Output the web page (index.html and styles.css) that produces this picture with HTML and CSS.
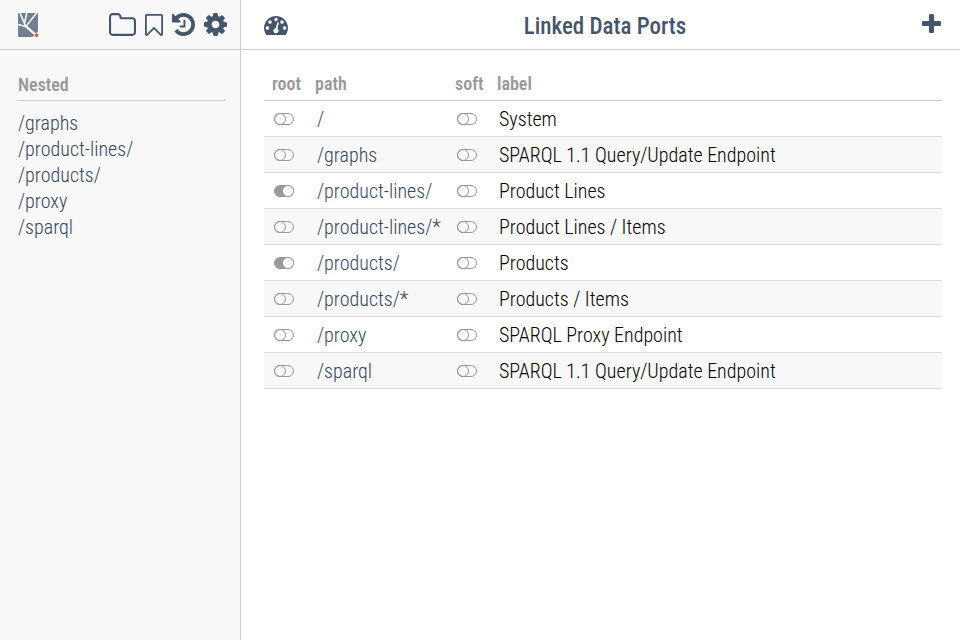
FILE: index.html
```html
<!DOCTYPE html>
<html lang="en">
<head>
<meta charset="utf-8">
<meta name="viewport" content="width=device-width, initial-scale=1">
<title>Linked Data Ports</title>
<link rel="stylesheet" href="styles.css">
</head>
<body>
<aside class="sidebar">
  <header class="bar sidebar-bar">
    <a class="icon" href="#" aria-label="Home">
      <svg width="20" height="24" viewBox="0 0 20 24">
        <rect width="20" height="24" rx="1" fill="#708090"/>
        <path d="M0 11.5L7.8 13.6L20 24M2 0L7.8 13.6L18.5 0M8.8 0L6.6 9.5" fill="none" stroke="#fff" stroke-width="1.5"/>
        <path d="M8 13.4L18.6 22.5" stroke="#fff" stroke-width="2.2"/>
        <path d="M14.8 24L20 18.6V24z" fill="#f8f8f8"/>
        <circle cx="18.6" cy="22.2" r="1.7" fill="#f9471a"/>
      </svg>
    </a>
    <nav class="tools">
      <button class="icon" type="button" aria-label="Nested ports"><svg width="27" height="23" viewBox="64 128 1664 1408"><path d="M1600 1312v-704q0-40-28-68t-68-28h-704q-40 0-68-28t-28-68v-64q0-40-28-68t-68-28h-320q-40 0-68 28t-28 68v960q0 40 28 68t68 28h1216q40 0 68-28t28-68zm128-704v704q0 92-66 158t-158 66h-1216q-92 0-158-66t-66-158v-960q0-92 66-158t158-66h320q92 0 158 66t66 158v32h672q92 0 158 66t66 158z"/></svg></button>
      <button class="icon" type="button" aria-label="Bookmarks"><svg width="18" height="22" viewBox="256 128 1280 1513" preserveAspectRatio="none"><path d="M1408 256h-1024v1242l423-406 89-85 89 85 423 406v-1242zm12-128q23 0 44 9 33 13 52.5 41t19.5 62v1289q0 34-19.5 62t-52.5 41q-19 8-44 8-48 0-83-32l-441-424-441 424q-36 33-83 33-23 0-44-9-33-13-52.5-41t-19.5-62v-1289q0-34 19.5-62t52.5-41q21-9 44-9h1048z"/></svg></button>
      <button class="icon" type="button" aria-label="History"><svg width="23" height="23" viewBox="128 128 1536 1536"><path d="M1664 896q0 156-61 298t-164 245-245 164-298 61q-172 0-327-72.5t-264-204.5q-7-10-6.5-22.5t8.5-20.5l137-138q10-9 25-9 16 2 23 12 73 95 179 147t225 52q104 0 198.5-40.5t163.5-109.5 109.5-163.5 40.5-198.5-40.5-198.5-109.5-163.5-163.5-109.5-198.5-40.5q-98 0-188 35.5t-160 101.5l137 138q31 30 14 69-17 40-59 40h-448q-26 0-45-19t-19-45v-448q0-42 40-59 39-17 69 14l130 129q107-101 244.5-156.5t284.5-55.5q156 0 298 61t245 164 164 245 61 298zm-640-288v448q0 14-9 23t-23 9h-320q-14 0-23-9t-9-23v-64q0-14 9-23t23-9h224v-352q0-14 9-23t23-9h64q14 0 23 9t9 23z"/></svg></button>
      <button class="icon" type="button" aria-label="Settings"><svg width="23" height="23" viewBox="128 128 1536 1536"><path d="M1152 896q0-106-75-181t-181-75-181 75-75 181 75 181 181 75 181-75 75-181zm512-109v222q0 12-8 23t-20 13l-185 28q-19 54-39 91 35 50 107 138 10 12 10 25t-9 23q-27 37-99 108t-94 71q-12 0-26-9l-138-108q-44 23-91 38-16 136-29 186-7 28-36 28h-222q-14 0-24.5-8.5t-11.5-21.5l-28-184q-49-16-90-37l-141 107q-10 9-25 9-14 0-25-11-126-114-165-168-7-10-7-23 0-12 8-23 15-21 51-66.5t54-70.5q-27-50-41-99l-183-27q-13-2-21-12.5t-8-23.5v-222q0-12 8-23t19-13l186-28q14-46 39-92-40-57-107-138-10-12-10-24 0-10 9-23 26-36 98.5-107.5t94.5-71.5q13 0 26 10l138 107q44-23 91-38 16-136 29-186 7-28 36-28h222q14 0 24.5 8.5t11.5 21.5l28 184q49 16 90 37l142-107q9-9 24-9 13 0 25 10 129 119 165 170 7 8 7 22 0 12-8 23-15 21-51 66.5t-54 70.5q26 50 41 98l183 28q13 2 21 12.5t8 23.5z"/></svg></button>
    </nav>
  </header>
  <section class="nested">
    <h2 class="nested-title">Nested</h2>
    <ul class="nested-list">
      <li><a href="#">/graphs</a></li>
      <li><a href="#">/product-lines/</a></li>
      <li><a href="#">/products/</a></li>
      <li><a href="#">/proxy</a></li>
      <li><a href="#">/sparql</a></li>
    </ul>
  </section>
</aside>
<main class="main">
  <header class="bar main-bar">
    <button class="icon" type="button" aria-label="Dashboard"><svg width="24" height="19" viewBox="0 256 1792 1408"><path d="M384 1152q0-53-37.5-90.5t-90.5-37.5-90.5 37.5-37.5 90.5 37.5 90.5 90.5 37.5 90.5-37.5 37.5-90.5zm192-448q0-53-37.5-90.5t-90.5-37.5-90.5 37.5-37.5 90.5 37.5 90.5 90.5 37.5 90.5-37.5 37.5-90.5zm428 481l101-382q6-26-7.5-48.5t-38.5-29.5-48 6.5-30 39.5l-101 382q-60 5-107 43.5t-63 98.5q-20 77 20 146t117 89 146-20 89-117q16-60-6-117t-72-91zm660-33q0-53-37.5-90.5t-90.5-37.5-90.5 37.5-37.5 90.5 37.5 90.5 90.5 37.5 90.5-37.5 37.5-90.5zm-640-640q0-53-37.5-90.5t-90.5-37.5-90.5 37.5-37.5 90.5 37.5 90.5 90.5 37.5 90.5-37.5 37.5-90.5zm448 192q0-53-37.5-90.5t-90.5-37.5-90.5 37.5-37.5 90.5 37.5 90.5 90.5 37.5 90.5-37.5 37.5-90.5zm320 448q0 261-141 483-19 29-54 29h-1402q-35 0-54-29-141-221-141-483 0-182 71-348t191-286 286-191 348-71 348 71 286 191 191 286 71 348z"/></svg></button>
    <h1 class="title">Linked Data Ports</h1>
    <button class="icon add" type="button" aria-label="Add port"><svg width="19" height="19" viewBox="192 128 1408 1408"><path d="M1600 736v192q0 40-28 68t-68 28h-416v416q0 40-28 68t-68 28h-192q-40 0-68-28t-28-68v-416h-416q-40 0-68-28t-28-68v-192q0-40 28-68t68-28h416v-416q0-40 28-68t68-28h192q40 0 68 28t28 68v416h416q40 0 68 28t28 68z"/></svg></button>
  </header>
  <div class="content">
    <table class="ports">
      <colgroup><col class="col-root"><col class="col-path"><col class="col-soft"><col></colgroup>
      <thead>
        <tr><th scope="col">root</th><th scope="col">path</th><th scope="col">soft</th><th scope="col">label</th></tr>
      </thead>
      <tbody>
        <tr><td><input type="checkbox" class="toggle" aria-label="root"></td><td><a href="#">/</a></td><td><input type="checkbox" class="toggle" aria-label="soft"></td><td>System</td></tr>
        <tr><td><input type="checkbox" class="toggle" aria-label="root"></td><td><a href="#">/graphs</a></td><td><input type="checkbox" class="toggle" aria-label="soft"></td><td>SPARQL 1.1 Query/Update Endpoint</td></tr>
        <tr><td><input type="checkbox" class="toggle" aria-label="root" checked></td><td><a href="#">/product-lines/</a></td><td><input type="checkbox" class="toggle" aria-label="soft"></td><td>Product Lines</td></tr>
        <tr><td><input type="checkbox" class="toggle" aria-label="root"></td><td><a href="#">/product-lines/*</a></td><td><input type="checkbox" class="toggle" aria-label="soft"></td><td>Product Lines / Items</td></tr>
        <tr><td><input type="checkbox" class="toggle" aria-label="root" checked></td><td><a href="#">/products/</a></td><td><input type="checkbox" class="toggle" aria-label="soft"></td><td>Products</td></tr>
        <tr><td><input type="checkbox" class="toggle" aria-label="root"></td><td><a href="#">/products/*</a></td><td><input type="checkbox" class="toggle" aria-label="soft"></td><td>Products / Items</td></tr>
        <tr><td><input type="checkbox" class="toggle" aria-label="root"></td><td><a href="#">/proxy</a></td><td><input type="checkbox" class="toggle" aria-label="soft"></td><td>SPARQL Proxy Endpoint</td></tr>
        <tr><td><input type="checkbox" class="toggle" aria-label="root"></td><td><a href="#">/sparql</a></td><td><input type="checkbox" class="toggle" aria-label="soft"></td><td>SPARQL 1.1 Query/Update Endpoint</td></tr>
      </tbody>
    </table>
  </div>
</main>
</body>
</html>
```
FILE: styles.css
```css
*,
*::before {
  box-sizing: border-box;
}

body {
  margin: 0;
  min-height: 100vh;
  display: grid;
  grid-template-columns: 1fr 3fr;
  background: #fff;
  color: #000;
  font: 300 20px/26px "Roboto Condensed", Roboto, sans-serif;
}

a {
  color: #34465c;
  text-decoration: none;
}

.sidebar {
  background: #f8f8f8;
  border-right: 1px solid #ccc;
  margin-right: -1px;
}

.bar {
  display: flex;
  align-items: center;
  height: 50px;
  border-bottom: 1px solid #ccc;
}

.sidebar-bar {
  justify-content: space-between;
  padding: 0 13px 0 18px;
}

.tools {
  display: flex;
  align-items: center;
  gap: 9px;
}

.icon {
  display: block;
  padding: 0;
  border: 0;
  background: none;
  color: #44566c;
  cursor: pointer;
}

.icon svg {
  display: block;
  fill: currentColor;
}

.nested {
  padding: 20px 14px 0 18px;
}

.nested-title {
  margin: 0 0 9px;
  padding: 2px 0;
  border-bottom: 1px solid #ccc;
  color: #999;
  font-size: 18px;
  font-weight: 600;
}

.nested-list {
  margin: 0;
  padding: 0;
  list-style: none;
}

.main {
  margin-left: 1px;
}

.main-bar {
  justify-content: space-between;
  padding: 2px 19px 0 23px;
}

.title {
  margin: 0;
  padding-top: 3px;
  color: #44566c;
  font-size: 23px;
  font-weight: 500;
}

.add {
  padding-bottom: 4px;
}

.content {
  padding: 18px 18px 0 23px;
}

.ports {
  width: 100%;
  border-collapse: collapse;
  table-layout: fixed;
}

.col-root {
  width: 43px;
}

.col-path {
  width: 140px;
}

.col-soft {
  width: 42px;
}

.ports th {
  height: 32px;
  padding: 0 8px;
  border-bottom: 1px solid #ccc;
  color: #999;
  font-size: 18px;
  font-weight: 600;
  text-align: left;
}

.ports td {
  height: 36px;
  padding: 2px 10px 0;
  border-bottom: 1px solid #ddd;
  white-space: nowrap;
}

.ports tbody tr:nth-child(even) {
  background: #f8f8f8;
}

.toggle {
  appearance: none;
  display: block;
  position: relative;
  width: 20px;
  height: 12px;
  margin: 0;
  border: 1px solid #999;
  border-radius: 6px;
}

.toggle::before {
  content: "";
  position: absolute;
  top: -1px;
  left: -1px;
  width: 12px;
  height: 12px;
  border: 1px solid #999;
  border-radius: 50%;
}

.toggle:checked {
  background: #999;
}

.toggle:checked::before {
  left: 7px;
  background: #fff;
}
```
